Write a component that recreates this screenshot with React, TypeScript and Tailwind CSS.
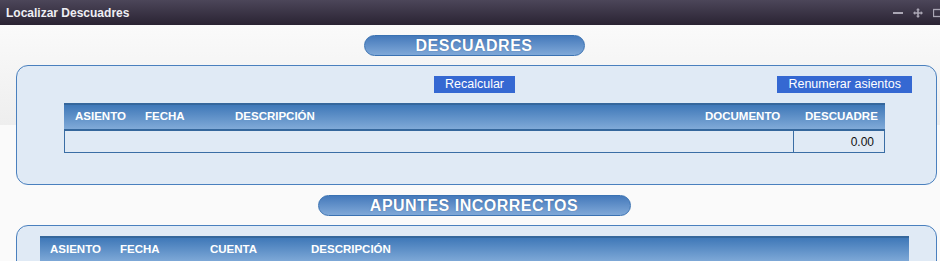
import React from "react";

const Pill = ({ children, w }: { children: React.ReactNode; w: string }) => (
  <div className="flex justify-center pl-2">
    <div
      className={`${w} h-[21px] rounded-full border border-[#3a72b2] bg-[linear-gradient(to_bottom,#4579bb,#80a9d8)] flex items-center justify-center text-white font-bold text-[16px] leading-none tracking-[0.5px] [text-shadow:0_0_1px_rgba(0,40,90,0.5)]`}
    >
      {children}
    </div>
  </div>
);

const Btn = ({ children, cls }: { children: React.ReactNode; cls?: string }) => (
  <button
    className={`h-[17px] bg-[#3568d2] text-white text-[12.5px] leading-none px-[11px] flex items-center ${cls ?? ""}`}
  >
    {children}
  </button>
);

const headCls =
  "h-[28px] border-t-2 border-b-2 border-[#35679c] bg-[linear-gradient(to_bottom,#3f78b8,#80aad8)] flex items-center text-white font-bold text-[11.5px] leading-none";

export default function App() {
  return (
    <div className="w-[940px] h-[261px] overflow-hidden font-['Liberation_Sans',Arial,sans-serif] bg-[#fafafa]">
      {/* title bar */}
      <div className="h-[25px] bg-[linear-gradient(to_bottom,#4c4659,#2a2333)] flex items-center justify-between pl-[6px]">
        <span className="text-[#eeeef3] font-bold text-[12px]">Localizar Descuadres</span>
        <div className="flex items-center gap-[10px] text-[#aaa6b4] mr-[-3px]">
          <svg width="10" height="10" viewBox="0 0 10 10">
            <rect x="0" y="4" width="10" height="2" fill="currentColor" />
          </svg>
          <svg width="10" height="10" viewBox="0 0 10 10">
            <path d="M5 0 L7 2.2 H5.8 V4.2 H7.8 V3 L10 5 L7.8 7 V5.8 H5.8 V7.8 H7 L5 10 L3 7.8 H4.2 V5.8 H2.2 V7 L0 5 L2.2 3 V4.2 H4.2 V2.2 H3 Z" fill="currentColor" />
          </svg>
          <svg width="10" height="10" viewBox="0 0 10 10">
            <rect x="0.5" y="1.5" width="9" height="7" fill="none" stroke="currentColor" strokeWidth="1.3" />
          </svg>
        </div>
      </div>

      {/* content */}
      <div className="bg-[linear-gradient(to_bottom,#fafafa_0px,#eeeeee_100px,#fafafa_100px)] pt-[10px]">
        <Pill w="w-[221px]">DESCUADRES</Pill>

        <div className="mt-[9px] ml-[16px] w-[921px] h-[120px] rounded-[12px] border border-[#4a80be] bg-[#e0eaf5] pt-[10px]">
          <div className="grid grid-cols-[1fr_auto_1fr] pl-[20px] pr-[24px]">
            <div />
            <Btn>Recalcular</Btn>
            <div className="flex justify-end">
              <Btn>Renumerar asientos</Btn>
            </div>
          </div>
          <div className="ml-[47px] w-[821px] mt-[10px]">
            <div className={headCls}>
              <div className="w-[70px] pl-[11px]">ASIENTO</div>
              <div className="w-[90px] pl-[11px]">FECHA</div>
              <div className="w-[470px] pl-[11px]">DESCRIPCIÓN</div>
              <div className="w-[100px] pl-[11px]">DOCUMENTO</div>
              <div className="w-[91px] pl-[11px]">DESCUADRE</div>
            </div>
            <div className="h-[22px] flex border-x border-b border-[#3a6ea5] text-[12px] text-[#111]">
              <div className="flex-1 border-r border-[#3a6ea5]" />
              <div className="w-[90px] flex items-center justify-end pr-[10px]">0.00</div>
            </div>
          </div>
        </div>

        <div className="mt-[10px]">
          <Pill w="w-[313px]">APUNTES INCORRECTOS</Pill>
        </div>

        <div className="mt-[9px] ml-[16px] w-[921px] h-[80px] rounded-t-[12px] border border-[#4a80be] bg-[#e0eaf5] pt-[10px]">
          <div className="ml-[23px] w-[869px]">
            <div className={headCls}>
              <div className="w-[70px] pl-[10px]">ASIENTO</div>
              <div className="w-[90px] pl-[10px]">FECHA</div>
              <div className="w-[101px] pl-[10px]">CUENTA</div>
              <div className="flex-1 pl-[10px]">DESCRIPCIÓN</div>
            </div>
          </div>
        </div>
      </div>
    </div>
  );
}
